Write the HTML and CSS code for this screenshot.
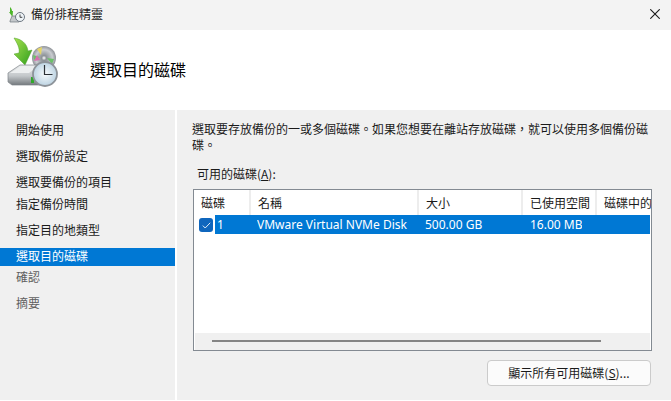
FILE: index.html
```html
<!DOCTYPE html>
<html lang="zh-TW">
<head>
<meta charset="utf-8">
<title>備份排程精靈</title>
<link rel="stylesheet" href="styles.css">
</head>
<body>
<div class="window">
  <div class="titlebar">
    <svg class="title-icon" width="18" height="18" viewBox="0 0 18 18">
      <path d="M2 0c1 1 2 2 2 4h1l-.5 6L1 5h1z" fill="#4cb52a"/>
      <path d="M2 14l2-5h7v6H2z" fill="#c4c8cb" stroke="#6f757b" stroke-width=".7"/>
      <circle cx="12" cy="10" r="4.500" fill="#eef3f7" stroke="#6d7680"/>
      <path d="M12 7.500v2.800h2.300" fill="none" stroke="#333" stroke-width=".9"/>
    </svg>
    <span class="title-text">備份排程精靈</span>
    <svg class="close-icon" width="10" height="10" viewBox="0 0 10 10"><path d="M.3.3l9.400 9.400M9.700.3L.3 9.700" stroke="#1a1a1a" stroke-width="1.100" fill="none"/></svg>
  </div>
  <header class="banner">
    <svg class="banner-icon" width="58" height="56" viewBox="0 0 58 56">
      <defs>
        <linearGradient id="arrow" x1="0" y1="0" x2="1" y2="1"><stop offset="0" stop-color="#a5e04e"/><stop offset="1" stop-color="#2f9e1c"/></linearGradient>
        <linearGradient id="drive" x1="0" y1="0" x2="0" y2="1"><stop offset="0" stop-color="#e9ebec"/><stop offset=".55" stop-color="#c2c6c9"/><stop offset="1" stop-color="#74797d"/></linearGradient>
        <radialGradient id="disc"><stop offset="0" stop-color="#fff"/><stop offset=".2" stop-color="#8d9297"/><stop offset=".7" stop-color="#c9ccd0"/><stop offset="1" stop-color="#8f9398"/></radialGradient>
        <radialGradient id="clock"><stop offset="0" stop-color="#f8fbfd"/><stop offset="1" stop-color="#bcd3e2"/></radialGradient>
      </defs>
      <path d="M7 1c7 1 13 5 14 13l4-1-7 15-11-11 5-1C13 11 10 6 7 1z" fill="url(#arrow)" stroke="#4c9f2a" stroke-width=".5"/>
      <circle cx="37" cy="21" r="12" fill="url(#disc)"/>
      <path d="M26 18l7 2-6 3zM47 22l-7-1 5 6z" fill="#6cc06a"/>
      <path d="M30 12l4 6 1-8z" fill="#e6d565"/>
      <path d="M27 24l6-1-3-5z" fill="#d86fb0"/>
      <path d="M1 36l12-8h20l3 3v14l-3 3H5l-4-3z" fill="url(#drive)" stroke="#80858a" stroke-width=".7"/>
      <path d="M3 36l11-7h17l-9 7z" fill="#eceeef"/>
      <rect x="24" y="40" width="3" height="6" fill="#2fa82a"/>
      <circle cx="38" cy="37" r="12" fill="url(#clock)" stroke="#8d9399" stroke-width="1.800"/>
      <path d="M37.500 28v9.500h8" fill="none" stroke="#2c3136" stroke-width="1.200"/>
    </svg>
    <h1 class="banner-title">選取目的磁碟</h1>
  </header>
  <div class="main">
    <nav class="nav">
      <div class="nav-item nav-tall">開始使用</div>
      <div class="nav-item nav-tall">選取備份設定</div>
      <div class="nav-item nav-tall">選取要備份的項目</div>
      <div class="nav-item nav-short">指定備份時間</div>
      <div class="nav-item nav-tall">指定目的地類型</div>
      <div class="nav-item nav-tall nav-active">選取目的磁碟</div>
      <div class="nav-item nav-short nav-muted">確認</div>
      <div class="nav-item nav-tall nav-muted">摘要</div>
    </nav>
    <section class="content">
      <p class="desc">選取要存放備份的一或多個磁碟。如果您想要在離站存放磁碟，就可以使用多個備份磁碟。</p>
      <div class="list-label">可用的磁碟(<u>A</u>):</div>
      <div class="list">
        <div class="row head">
          <div class="cell c-disk">磁碟</div>
          <div class="cell c-name">名稱</div>
          <div class="cell c-size">大小</div>
          <div class="cell c-used">已使用空間</div>
          <div class="cell c-rest">磁碟中的</div>
        </div>
        <div class="row item">
          <span class="check"><svg width="9" height="7" viewBox="0 0 9 7"><path d="M.8 3.600l2.400 2.400L8.200.8" fill="none" stroke="#dfeaf6" stroke-width="1"/></svg></span>
          <div class="selected">
            <div class="cell s-disk">1</div>
            <div class="cell s-name">VMware Virtual NVMe Disk</div>
            <div class="cell s-size">500.00 GB</div>
            <div class="cell s-used">16.00 MB</div>
          </div>
        </div>
        <div class="list-fill"></div>
        <div class="scroll"><div class="thumb"></div></div>
      </div>
      <div class="actions"><button class="btn" type="button">顯示所有可用磁碟(<u>S</u>)...</button></div>
    </section>
  </div>
</div>
</body>
</html>
```
FILE: styles.css
```css
* { box-sizing: border-box; }
html, body { margin: 0; padding: 0; height: 100%; overflow: hidden; }
body { font-family: "Noto Sans CJK TC", "Noto Sans", sans-serif; font-size: 12px; color: #1a1a1a; background: #fff; }
.window { width: 671px; height: 401px; display: flex; flex-direction: column; }
.titlebar { height: 30px; flex: none; background: #f3f3f3; display: flex; align-items: center; padding: 0 11px 0 8px; }
.title-icon { flex: none; margin-top: 2px; }
.title-text { margin-left: 5px; line-height: 28px; height: 28px; margin-top: -2px; }
.close-icon { margin-left: auto; margin-top: -2px; }
.banner { height: 80px; flex: none; background: #fff; display: flex; align-items: flex-start; padding: 7px 0 0 7px; }
.banner-title { margin: 20px 0 0 25px; font-size: 16px; font-weight: 400; line-height: 24px; color: #000; }
.main { flex: 1; display: flex; gap: 2px; min-height: 0; padding-bottom: 1px; }
.nav { width: 175px; flex: none; background: #f0f0f0; padding-top: 7px; }
.nav-item { padding-left: 16px; line-height: 18px; height: 26px; padding-top: 4px; color: #1a1a1a; }
.nav-short { height: 22px; padding-top: 0; }
.nav-active { background: #0078d4; color: #fff; height: 18px; margin-top: 5px; padding-top: 0; margin-bottom: 2px; line-height: 16px; }
.nav-muted { color: #5f5f5f; }
.content { flex: 1; background: #f0f0f0; padding: 11px 20px 0 15px; display: flex; flex-direction: column; min-width: 0; }
.desc { margin: 0; line-height: 16px; width: 470px; color: #1a1a1a; }
.list-label { margin: 13px 0 0 5px; line-height: 16px; }
.list { margin: 7px 0 0 1px; width: 459px; height: 162px; border: 1px solid #838a92; background: #fff; display: flex; flex-direction: column; flex: none; }
.row { display: flex; flex: none; }
.head { height: 25px; align-items: stretch; }
.cell { line-height: 18px; white-space: nowrap; overflow: hidden; }
.head .cell { border-right: 2px solid #ededed; padding-top: 4px; padding-left: 7px; }
.c-disk { width: 57px; }
.c-name { width: 168px; }
.c-size { width: 104px; }
.c-used { width: 74px; }
.c-rest { flex: 1; border-right: 0 !important; }
.item { height: 19px; padding-left: 5px; position: relative; }
.check { width: 14px; height: 14px; margin-top: 3px; border-radius: 3px; background: #0f66bd; display: flex; align-items: center; justify-content: center; flex: none; }
.selected { margin-left: 2px; flex: 1; margin-right: 1px; background: #0078d4; color: #fff; display: flex; line-height: 19px; font-family: "Noto Sans", sans-serif; font-size: 12px; }
.s-disk { width: 42px; padding-left: 2px; line-height: 19px; }
.s-name { width: 168px; line-height: 19px; }
.s-size { width: 105px; line-height: 19px; }
.s-used { line-height: 19px; }
.list-fill { flex: 1; }
.scroll { height: 17px; flex: none; background: #f0f0f0; margin: 0 1px 0 1px; padding: 7px 0 0 17px; }
.thumb { width: 389px; height: 2px; background: #858585; }
.actions { display: flex; justify-content: flex-end; margin-top: 9px; }
.btn { width: 164px; height: 26px; border: 1px solid #cbcbcb; border-radius: 4px; background: #fbfbfb; font: inherit; color: #1a1a1a; padding: 0; line-height: 22px; }
```
